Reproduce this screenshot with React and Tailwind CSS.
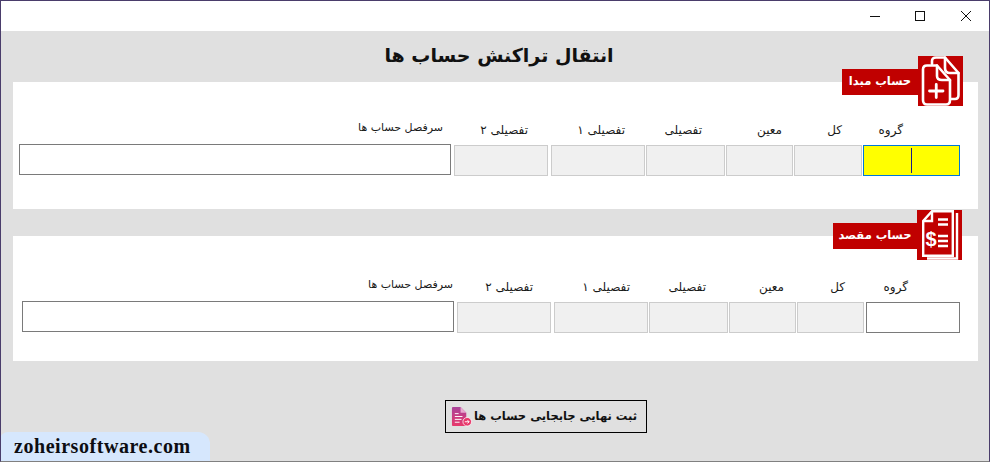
const fa = "font-['Tahoma','DejaVu_Sans','Noto_Sans',sans-serif]";

// mr = where the label ends inside its cell, ml = gap to the previous field
const sourceCells = [
  { label: "سرفصل حساب ها", w: "w-[432px]", mr: "mr-[8px]", kind: "title" },
  { label: "تفصیلی ۲", w: "w-[94px] ml-[3px]", mr: "mr-[20px]" },
  { label: "تفصیلی ۱", w: "w-[94px] ml-[3px]", mr: "mr-[20px]" },
  { label: "تفصیلی", w: "w-[79px] ml-[1px]", mr: "mr-[23px]" },
  { label: "معین", w: "w-[67px] ml-[1px]", mr: "mr-[11px]" },
  { label: "کل", w: "w-[68px] ml-[1px]", mr: "mr-[20px]" },
  { label: "گروه", w: "w-[97px] ml-[1px]", mr: "mr-[57px]", kind: "focus" },
];

const targetCells = [
  { label: "سرفصل حساب ها", w: "w-[432px]", mr: "mr-[1px]", kind: "title" },
  { label: "تفصیلی ۲", w: "w-[94px] ml-[3px]", mr: "mr-[18px]" },
  { label: "تفصیلی ۱", w: "w-[94px] ml-[3px]", mr: "mr-[18px]" },
  { label: "تفصیلی", w: "w-[79px] ml-[1px]", mr: "mr-[22px]" },
  { label: "معین", w: "w-[67px] ml-[1px]", mr: "mr-[12px]" },
  { label: "کل", w: "w-[67px] ml-[1px]", mr: "mr-[19px]" },
  { label: "گروه", w: "w-[94px] ml-[2px]", mr: "mr-[52px]", kind: "open" },
];

function Field({ kind }) {
  if (kind === "focus") {
    return (
      <div className="relative h-[31px]">
        <input readOnly className="block w-full h-full bg-[#ffff00] border border-[#0078d7] outline-none" />
        <span className="absolute left-[48px] top-[3px] h-[25px] w-px bg-[#1a1a8c]" />
      </div>
    );
  }
  if (kind === "title") {
    return <input readOnly className="block w-full h-[31px] mb-px bg-white border border-[#7a7a7a] outline-none" />;
  }
  if (kind === "open") {
    return <input readOnly className="block w-full h-[31px] bg-white border border-[#7a7a7a] outline-none" />;
  }
  return <input readOnly disabled className="block w-full h-[31px] bg-[#f0f0f0] border border-[#cccccc] outline-none" />;
}

function FieldRow({ cells }) {
  return (
    <div className="flex items-end">
      {cells.map((c) => (
        <div key={c.label} className={`${c.w} shrink-0`}>
          <p
            dir="rtl"
            className={`leading-[18px] text-[#1a1a1a] text-right whitespace-nowrap ${c.mr} ${c.kind === "title" ? "pb-[7px] text-[11px]" : "pb-[6px] text-[12px]"} ${fa}`}
          >
            {c.label}
          </p>
          <Field kind={c.kind} />
        </div>
      ))}
    </div>
  );
}

function CopyPlusIcon() {
  return (
    <svg viewBox="0 0 45 50" className="w-[45px] h-[50px] bg-[#c00000]" fill="none" stroke="white" strokeWidth="2.6" strokeLinejoin="round" strokeLinecap="round">
      <path d="M14 8 V5 Q14 1.5 18 1.5 H27 L40.5 17 V39 Q40.5 43 37 43 H33" />
      <path d="M27 1.5 V12 Q27 17 32 17 H40.5" />
      <path d="M9 9.5 H19 L32 24 V44 Q32 48.5 28 48.5 H9 Q5 48.5 5 44 V13.5 Q5 9.5 9 9.5 Z" />
      <path d="M19 9.5 V20 Q19 24 24 24 H32" />
      <path d="M11.5 35 H25 M18.25 28.5 V41.5" strokeWidth="2.8" />
    </svg>
  );
}

function InvoiceIcon() {
  return (
    <svg viewBox="0 0 45 50" className="w-[45px] h-[50px] bg-[#c00000]" fill="none" stroke="white" strokeWidth="2.4" strokeLinejoin="miter">
      <path d="M15 1.2 H35.8 V45.8 H6.2 V11 Z" />
      <path d="M15 1.2 V11 H6.2" />
      <path d="M40 3 V48.5 H10" />
      <path d="M21 9.5 H31 M21 14.5 H31 M21 26 H31 M21 31 H31 M21 36 H31" strokeWidth="2.4" />
      <text x="14" y="36" fontSize="20" fontWeight="700" fill="white" stroke="none" textAnchor="middle" fontFamily="Liberation Sans, sans-serif">$</text>
    </svg>
  );
}

function Badge({ text, icon, barClass, posClass }) {
  return (
    <div className={`absolute flex items-center ${posClass}`}>
      <div dir="rtl" className={`mt-[2px] h-[26px] flex items-center justify-center whitespace-nowrap bg-[#c00000] text-white text-[11.5px] font-bold ${fa} ${barClass}`}>
        {text}
      </div>
      {icon}
    </div>
  );
}

function SubmitIcon() {
  return (
    <svg viewBox="0 0 22 22" className="w-[21px] h-[21px] shrink-0">
      <defs>
        <linearGradient id="pink" x1="0" y1="0" x2="0" y2="1">
          <stop offset="0" stopColor="#a9439a" />
          <stop offset="1" stopColor="#e8396b" />
        </linearGradient>
      </defs>
      <path d="M1 2 Q1 1 2 1 H10 L16 7 V20 Q16 21 15 21 H2 Q1 21 1 20 Z" fill="url(#pink)" />
      <path d="M10 1 V7 H16" fill="#e9a9cf" />
      <path d="M4 8 H8 M4 11 H12 M4 14 H11 M4 17 H9" stroke="white" strokeWidth="1" />
      <circle cx="17" cy="16.5" r="4.5" fill="#e8396b" stroke="white" strokeWidth="0.8" />
      <path d="M14.5 16.5 H19 M17.3 14.8 L19 16.5 L17.3 18.2" stroke="white" strokeWidth="1" fill="none" />
    </svg>
  );
}

function WindowControls() {
  return (
    <div className="h-[30px] shrink-0 bg-white flex items-center justify-end pr-[18px] gap-[35px]">
      <svg viewBox="0 0 10 10" className="w-[10px] h-[10px]" stroke="#111" fill="none"><path d="M0 5.5 H10" /></svg>
      <svg viewBox="0 0 10 10" className="w-[10px] h-[10px]" stroke="#111" fill="none"><rect x="0.5" y="0.5" width="9" height="9" /></svg>
      <svg viewBox="0 0 10 10" className="ml-px w-[10px] h-[10px]" stroke="#111" fill="none"><path d="M0 0 L10 10 M10 0 L0 10" /></svg>
    </div>
  );
}

export default function App() {
  return (
    <div className="relative w-[990px] h-[462px] overflow-hidden flex flex-col bg-[#e0e0e0] border border-[#4a3d6b] border-b-[#808080]">
      <WindowControls />

      <h1 dir="rtl" className={`h-[51px] pt-[8px] pl-[8px] text-center text-[19px] leading-[32px] font-bold text-[#111] ${fa}`}>
        انتقال تراکنش حساب ها
      </h1>

      <section className="relative ml-[12px] w-[965px] h-[127px] shrink-0 bg-white pt-[37px] pl-[6px]">
        <FieldRow cells={sourceCells} />
        <Badge text="حساب مبدا" icon={<CopyPlusIcon />} barClass="w-[76px]" posClass="left-[829px] top-[-26px]" />
      </section>

      <section className="relative ml-[12px] mt-[27px] w-[965px] h-[125px] shrink-0 bg-white pt-[40px] pl-[9px]">
        <FieldRow cells={targetCells} />
        <Badge text="حساب مقصد" icon={<InvoiceIcon />} barClass="w-[84px]" posClass="left-[820px] top-[-26px]" />
      </section>

      <div className="mt-[39px] flex pl-[444px]">
        <button dir="rtl" className={`w-[202px] h-[33px] flex items-center justify-start pr-[9px] gap-[2px] whitespace-nowrap border-[1.5px] border-black bg-[#e0e0e0] text-[11.5px] font-bold text-[#111] ${fa}`}>
          ثبت نهایی جابجایی حساب ها
          <SubmitIcon />
        </button>
      </div>

      <div className="absolute left-[-1px] bottom-[-1px] w-[210px] h-[30px] bg-[#d6e7fd] rounded-tr-[12px] rounded-tl-[8px] pl-[14px] font-['Liberation_Serif',serif] font-bold text-[20px] leading-[28px] tracking-[0.55px] text-[#0d0d12]">
        zoheirsoftware.com
      </div>
    </div>
  );
}
